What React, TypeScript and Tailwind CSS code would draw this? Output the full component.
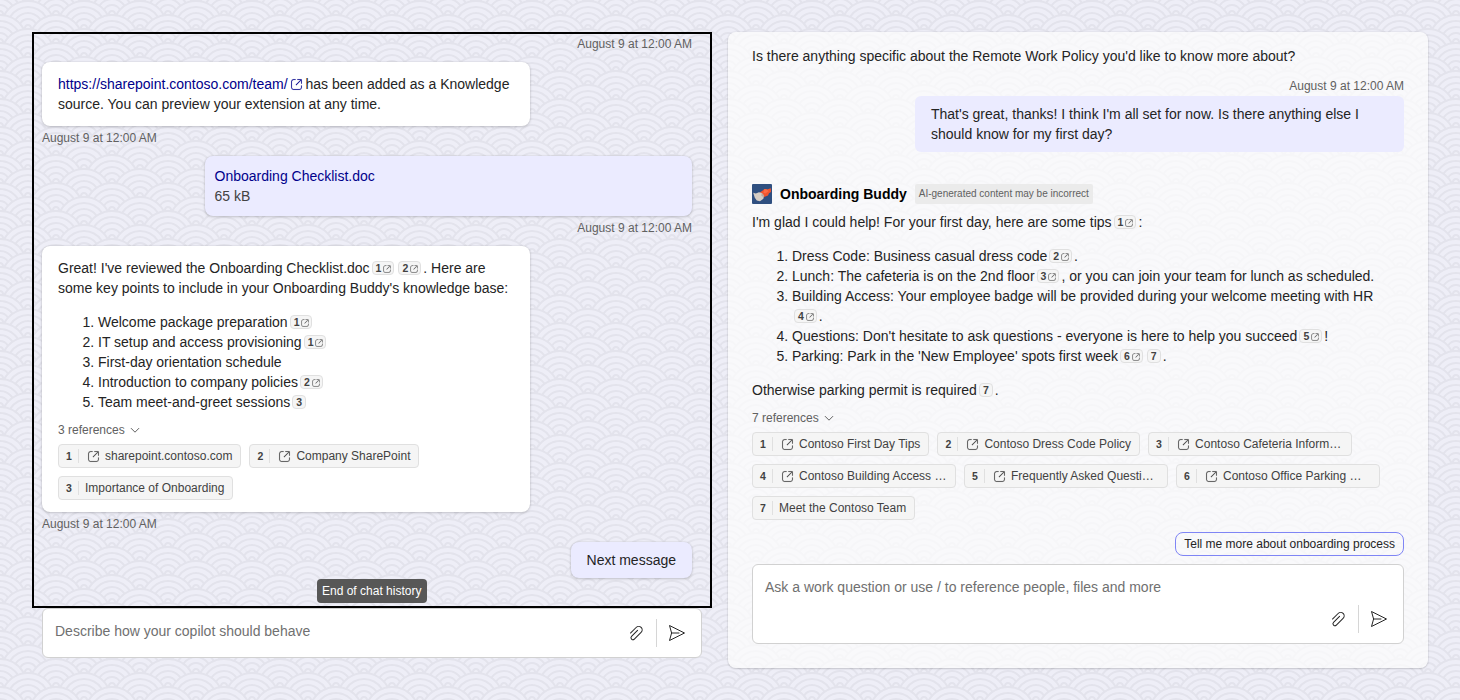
import type { ReactNode } from 'react';

const CLOUDS =
  'M56 26v2h-7.75c2.3-1.27 4.94-2 7.75-2zm-26 2a2 2 0 1 0-4 0h-4.09A25.98 25.98 0 0 0 0 16v-2c.67 0 1.34.02 2 .07V14a2 2 0 0 0-2-2v-2a4 4 0 0 1 3.98 3.6 28.09 28.09 0 0 1 2.8-3.86A8 8 0 0 0 0 6V4a9.99 9.99 0 0 1 8.17 4.23c.94-.95 1.96-1.83 3.03-2.63A13.98 13.98 0 0 0 0 0h7.75c2 1.1 3.73 2.63 5.1 4.45 1.12-.72 2.3-1.37 3.53-1.93A20.1 20.1 0 0 0 14.28 0h2.7c.45.56.88 1.14 1.29 1.74 1.3-.48 2.63-.87 4-1.15-.11-.2-.23-.4-.36-.59H26v.07a28.4 28.4 0 0 1 4 0V0h4.09l-.37.59c1.38.28 2.72.67 4.01 1.15.4-.6.84-1.18 1.3-1.74h2.69a20.1 20.1 0 0 0-2.1 2.52c1.23.56 2.41 1.2 3.54 1.93A16.08 16.08 0 0 1 48.25 0H56c-4.58 0-8.65 2.2-11.2 5.6 1.07.8 2.09 1.68 3.03 2.63A9.99 9.99 0 0 1 56 4v2a8 8 0 0 0-6.77 3.74c1.03 1.2 1.97 2.5 2.79 3.86A4 4 0 0 1 56 10v2a2 2 0 0 0-2 2.07 28.4 28.4 0 0 1 2-.07v2c-9.2 0-17.3 4.78-21.91 12H30zM7.75 28H0v-2c2.81 0 5.46.73 7.75 2zM56 20v2c-5.6 0-10.65 2.3-14.28 6h-2.7c4.04-4.89 10.15-8 16.98-8zm-39.03 8h-2.69C10.65 24.3 5.6 22 0 22v-2c6.83 0 12.94 3.11 16.97 8zm15.01-.4a28.09 28.09 0 0 1 2.8-3.86 8 8 0 0 0-13.55 0c1.03 1.2 1.97 2.5 2.79 3.86a4 4 0 0 1 7.96 0zm14.29-11.86c1.3-.48 2.63-.87 4-1.15a25.99 25.99 0 0 0-44.55 0c1.38.28 2.72.67 4.01 1.15a21.98 21.98 0 0 1 36.54 0zm-5.43 2.71c1.13-.72 2.3-1.37 3.54-1.93a19.98 19.98 0 0 0-32.76 0c1.23.56 2.41 1.2 3.54 1.93a15.98 15.98 0 0 1 25.68 0zm-4.67 3.78c.94-.95 1.96-1.83 3.03-2.63a13.98 13.98 0 0 0-22.4 0c1.07.8 2.09 1.68 3.03 2.63a9.99 9.99 0 0 1 16.34 0z';

function Wallpaper() {
  return (
    <svg className="absolute inset-0 h-full w-full" aria-hidden="true">
      <defs>
        <pattern id="clouds" width="56" height="28" patternUnits="userSpaceOnUse">
          <path d={CLOUDS} fill="#e3e3ec" fillRule="evenodd" />
        </pattern>
      </defs>
      <rect width="100%" height="100%" fill="url(#clouds)" />
    </svg>
  );
}

function OpenIcon({ className }: { className: string }) {
  return (
    <svg viewBox="0 0 20 20" fill="currentColor" className={className}>
      <path d="M6 4a2 2 0 0 0-2 2v8c0 1.1.9 2 2 2h8a2 2 0 0 0 2-2v-2.5a.5.5 0 0 1 1 0V14a3 3 0 0 1-3 3H6a3 3 0 0 1-3-3V6a3 3 0 0 1 3-3h2.5a.5.5 0 0 1 0 1H6Zm5-.5c0-.28.22-.5.5-.5h5c.28 0 .5.22.5.5v5a.5.5 0 0 1-1 0V4.7l-6.15 6.15a.5.5 0 0 1-.7-.7L15.29 4H11.5a.5.5 0 0 1-.5-.5Z" stroke="currentColor" strokeWidth="0.15" />
    </svg>
  );
}

function ChevronIcon() {
  return (
    <svg viewBox="0 0 12 12" fill="none" stroke="currentColor" className="h-3 w-3">
      <path d="M2.2 4.4 6 8.2l3.8-3.8" strokeLinecap="round" strokeLinejoin="round" />
    </svg>
  );
}

function AttachIcon() {
  return (
    <svg viewBox="0 0 20 20" fill="currentColor" className="h-5 w-5">
      <path d="m4.83 10.48 5.65-5.65a3 3 0 0 1 4.25 4.24L8 15.8a1.5 1.5 0 0 1-2.12-2.12l6-6.01a.5.5 0 1 0-.7-.71l-6 6.01a2.5 2.5 0 0 0 3.53 3.54l6.71-6.72a4 4 0 1 0-5.65-5.66L4.12 9.78a.5.5 0 0 0 .7.7Z" />
    </svg>
  );
}

function SendIcon() {
  return (
    <svg viewBox="0 0 20 20" fill="none" stroke="currentColor" strokeLinejoin="round" className="h-5 w-5">
      <path d="M2.5 2.5 17.5 10l-15 7.5L4.6 10Z" />
      <path d="M4.6 10H12" strokeLinecap="round" />
    </svg>
  );
}

function Avatar() {
  return (
    <svg viewBox="0 0 20 20" className="h-5 w-5">
      <rect width="20" height="20" rx="1" fill="#2f4f80" />
      <path d="M8 8.5 12.5 5l2.5.6 3.8-1.4.2 3.8-2 1.2-1 2.3-4.5 1.7-3-2z" fill="#f2542d" />
      <path d="M1.2 8.8l2.6.8L7 8.2l2.8.8 2.2 2.6-.6 3.2-3.4 2.4-3.2-.6-2-2.8z" fill="#d6cdc4" />
      <path d="M9.6 9l2.6 2.4-.6 1.8-2.2-1.4z" fill="#b9a79c" />
      <path d="M12.5 5l2.5.6 1.6 1.6-3.2 2.2-2-.6z" fill="#ff6b43" />
    </svg>
  );
}

function Cite({ n, link = true }: { n: number; link?: boolean }) {
  return (
    <span className="relative -top-px mx-[2px] inline-flex h-[14px] items-center gap-px rounded-[4px] border border-[#e0e0e0] bg-[#f5f5f5] px-[3px] align-middle text-[10.5px] leading-[12px] font-bold text-[#424242]">
      {n}
      {link && <OpenIcon className="mt-px -mr-[2px] h-2.5 w-2.5" />}
    </span>
  );
}

function Stamp({ className = '' }: { className?: string }) {
  return <div className={`text-xs leading-4 text-[#616161] ${className}`}>August 9 at 12:00 AM</div>;
}

type Ref = { n: number; label: string; link?: boolean; full?: boolean };

function References({ items }: { items: Ref[] }) {
  return (
    <div className="flex flex-wrap gap-2">
      {items.map((r) => (
        <div
          key={r.n}
          className={`flex h-6 items-center rounded-[4px] border border-[#e0e0e0] bg-[#f5f5f5] pr-2 pl-[7px] text-xs leading-4 text-[#424242] ${r.full ? 'w-[204px]' : ''}`}
        >
          <span className="w-[6px] text-[10.5px] font-bold">{r.n}</span>
          <span className="ml-[6px] h-[14px] w-px bg-[#e0e0e0]" />
          {r.link !== false && <OpenIcon className="ml-[7px] h-[15px] w-[15px] shrink-0" />}
          <span className={`${r.link !== false ? 'ml-1' : 'ml-[6px]'} whitespace-nowrap`}>{r.label}</span>
        </div>
      ))}
    </div>
  );
}

function RefHeader({ count }: { count: number }) {
  return (
    <div className="flex items-center gap-1 text-xs leading-4 text-[#616161]">
      {count} references
      <ChevronIcon />
    </div>
  );
}

function Actions() {
  return (
    <div className="flex items-center text-[#242424]">
      <AttachIcon />
      <span className="mr-[10px] ml-[10px] h-7 w-px bg-[#d6d6d6]" />
      <SendIcon />
    </div>
  );
}

function Card({ children, className }: { children: ReactNode; className: string }) {
  return (
    <div className={`rounded-lg shadow-[0_0_2px_rgba(0,0,0,0.12),0_1px_3px_rgba(0,0,0,0.16)] ${className}`}>{children}</div>
  );
}

function LeftChat() {
  return (
    <div className="flex w-[680px] flex-col">
      <div className="relative flex h-[576px] flex-col border-2 border-black pt-[2px] pr-[18px] pl-2">
        <Stamp className="self-end" />
        <Card className="mt-[10px] w-[488px] bg-white px-4 py-3">
          <a className="text-[#00008b]">
            https://sharepoint.contoso.com/team/
            <OpenIcon className="-mr-[2px] ml-[1px] inline h-[15px] w-[15px] align-[-3px]" />
          </a>{' '}
          has been added as a Knowledge source. You can preview your extension at any time.
        </Card>
        <Stamp className="mt-1" />
        <Card className="mt-[10px] w-[487.5px] self-end bg-[#ebebff] p-[10px]">
          <div className="text-[#00008b]">Onboarding Checklist.doc</div>
          <div className="text-[#424242]">65 kB</div>
        </Card>
        <Stamp className="mt-1 self-end" />
        <Card className="mt-[10px] w-[488px] bg-white px-4 py-3">
          <p>
            Great! I've reviewed the Onboarding Checklist.doc
            <Cite n={1} />
            <Cite n={2} />. Here are some key points to include in your Onboarding Buddy's knowledge base:
          </p>
          <ol className="my-[14px] mb-[10px] list-decimal pl-10">
            <li>
              Welcome package preparation
              <Cite n={1} />
            </li>
            <li>
              IT setup and access provisioning
              <Cite n={1} />
            </li>
            <li>First-day orientation schedule</li>
            <li>
              Introduction to company policies
              <Cite n={2} />
            </li>
            <li>
              Team meet-and-greet sessions
              <Cite n={3} link={false} />
            </li>
          </ol>
          <RefHeader count={3} />
          <div className="mt-[6px]">
            <References
              items={[
                { n: 1, label: 'sharepoint.contoso.com' },
                { n: 2, label: 'Company SharePoint' },
                { n: 3, label: 'Importance of Onboarding', link: false },
              ]}
            />
          </div>
        </Card>
        <Stamp className="mt-1" />
        <Card className="mt-[10px] self-end bg-[#ebebff] px-4 py-2">Next message</Card>
        <div className="absolute bottom-[3px] left-[283px] w-[110px] rounded-[4px] bg-[#575757] py-1 pl-[5px] text-xs leading-4 whitespace-nowrap text-white">
          End of chat history
        </div>
      </div>
      <div className="mr-[10px] ml-[10px] flex h-[50px] items-center justify-between rounded-md border border-[#d1d1d1] bg-white pr-[14px] pl-3">
        <span className="-mt-1 text-[#707070]">Describe how your copilot should behave</span>
        <Actions />
      </div>
    </div>
  );
}

function RightChat() {
  return (
    <div className="flex h-[636px] w-[700px] flex-col rounded-lg bg-[#fcfcfc]/75 px-6 pt-[14px] shadow-[0_0_2px_rgba(0,0,0,0.12),0_1px_2px_rgba(0,0,0,0.14)]">
      <p>Is there anything specific about the Remote Work Policy you'd like to know more about?</p>
      <Stamp className="mt-3 self-end" />
      <div className="mt-[2px] w-[489px] self-end rounded-md bg-[#ebebff] px-4 py-2">
        That's great, thanks! I think I'm all set for now. Is there anything else I should know for my first day?
      </div>
      <div className="mt-8 flex items-center gap-2">
        <Avatar />
        <span className="font-bold text-black">Onboarding Buddy</span>
        <span className="h-5 rounded-[2px] bg-[#ebebeb] px-1 text-[10px] leading-[19px] text-[#616161]">
          AI-generated content may be incorrect
        </span>
      </div>
      <p className="mt-2">
        I'm glad I could help! For your first day, here are some tips
        <Cite n={1} />:
      </p>
      <ol className="my-[14px] list-decimal pl-10">
        <li>
          Dress Code: Business casual dress code
          <Cite n={2} />.
        </li>
        <li>
          Lunch: The cafeteria is on the 2nd floor
          <Cite n={3} />, or you can join your team for lunch as scheduled.
        </li>
        <li>
          Building Access: Your employee badge will be provided during your welcome meeting with HR{' '}
          <span className="inline-block whitespace-nowrap">
            <Cite n={4} />.
          </span>
        </li>
        <li>
          Questions: Don't hesitate to ask questions - everyone is here to help you succeed
          <Cite n={5} />!
        </li>
        <li>
          Parking: Park in the 'New Employee' spots first week
          <Cite n={6} />
          <Cite n={7} link={false} />.
        </li>
      </ol>
      <p>
        Otherwise parking permit is required
        <Cite n={7} link={false} />.
      </p>
      <div className="mt-[10px] mb-[6px]">
        <RefHeader count={7} />
      </div>
      <References
        items={[
          { n: 1, label: 'Contoso First Day Tips' },
          { n: 2, label: 'Contoso Dress Code Policy' },
          { n: 3, label: 'Contoso Cafeteria Inform…', full: true },
          { n: 4, label: 'Contoso Building Access …', full: true },
          { n: 5, label: 'Frequently Asked Questi…', full: true },
          { n: 6, label: 'Contoso Office Parking …', full: true },
          { n: 7, label: 'Meet the Contoso Team', link: false },
        ]}
      />
      <div className="mt-3 h-6 self-end rounded-lg border border-[#7f85f5] px-2 text-xs leading-[22px]">
        Tell me more about onboarding process
      </div>
      <div className="mt-2 flex h-20 flex-col justify-between rounded-md border border-[#d1d1d1] bg-white pt-3 pr-[14px] pb-[10px] pl-3">
        <span className="text-[#707070]">Ask a work question or use / to reference people, files and more</span>
        <div className="flex justify-end">
          <Actions />
        </div>
      </div>
    </div>
  );
}

export default function App() {
  return (
    <div className="relative h-[700px] w-[1460px] overflow-hidden bg-[#eeeef7] font-['Liberation_Sans',Arial,sans-serif] text-sm leading-5 text-[#242424]">
      <Wallpaper />
      <div className="relative flex gap-4 p-8">
        <LeftChat />
        <RightChat />
      </div>
    </div>
  );
}
